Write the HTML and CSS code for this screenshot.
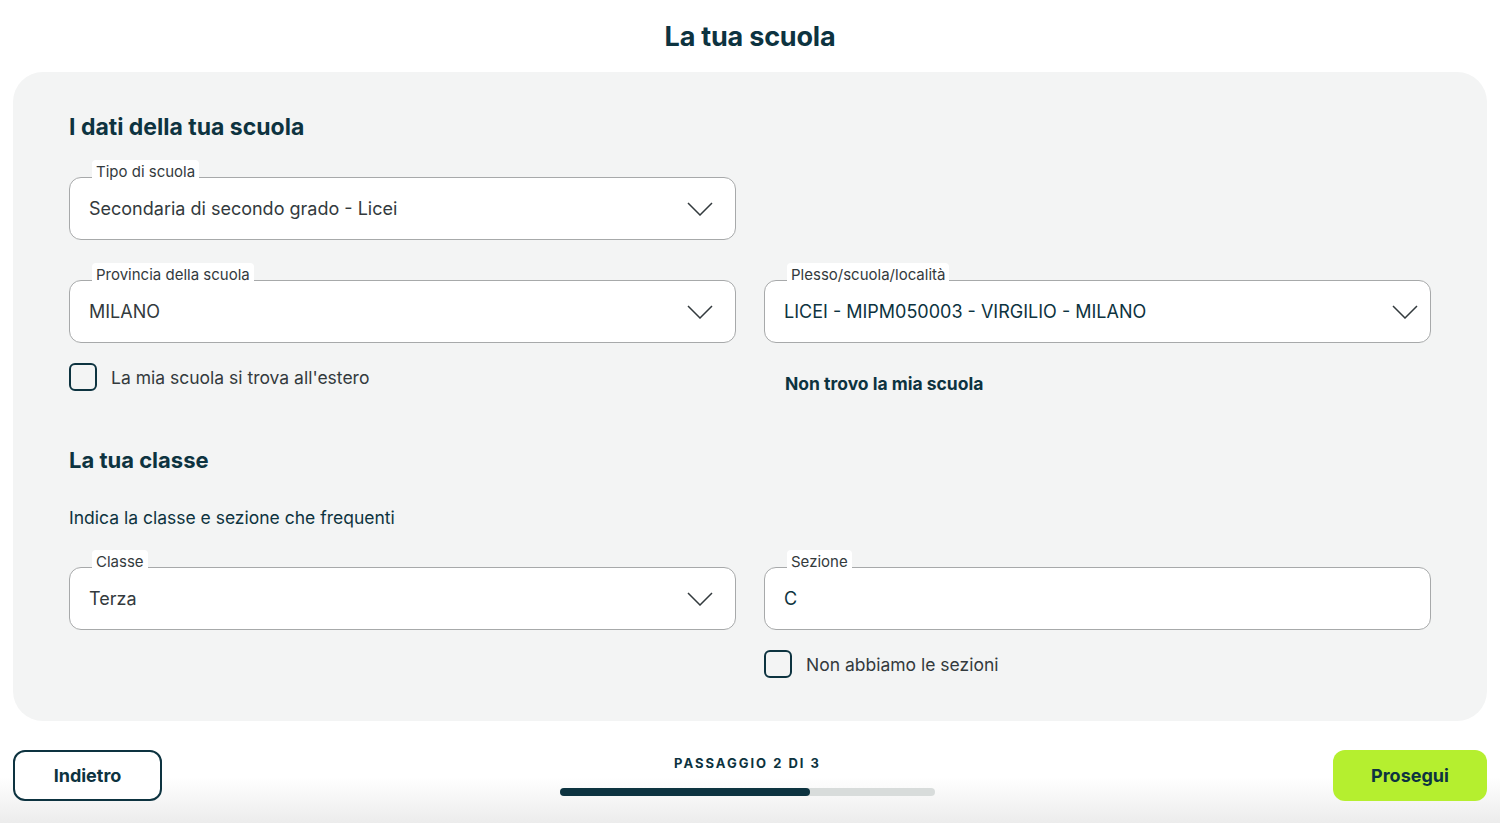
FILE: index.html
```html
<!DOCTYPE html>
<html lang="it">
<head>
    <meta charset="UTF-8">
    <title>La tua scuola</title>
    <link rel="stylesheet" href="styles.css">
</head>
<body>
    <div class="page">
        <h1 class="title">La tua scuola</h1>

        <div class="card">
            <h2>I dati della tua scuola</h2>

            <div class="grid first">
                <div class="field">
                    <span class="field-label">Tipo di scuola</span>
                    <span class="field-value">Secondaria di secondo grado - Licei</span>
                    <svg class="chevron" viewBox="0 0 26 14"><path d="M1 1 L13 13 L25 1" /></svg>
                </div>
                <div></div>
            </div>

            <div class="grid second">
                <div class="field">
                    <span class="field-label">Provincia della scuola</span>
                    <span class="field-value">MILANO</span>
                    <svg class="chevron" viewBox="0 0 26 14"><path d="M1 1 L13 13 L25 1" /></svg>
                </div>
                <div class="field tight">
                    <span class="field-label">Plesso/scuola/località</span>
                    <span class="field-value dark">LICEI - MIPM050003 - VIRGILIO - MILANO</span>
                    <svg class="chevron" viewBox="0 0 26 14"><path d="M1 1 L13 13 L25 1" /></svg>
                </div>
                <label class="check"><span class="box"></span>La mia scuola si trova all'estero</label>
                <a class="link">Non trovo la mia scuola</a>
            </div>

            <h2 class="classe">La tua classe</h2>
            <p class="hint">Indica la classe e sezione che frequenti</p>

            <div class="grid third">
                <div class="field">
                    <span class="field-label">Classe</span>
                    <span class="field-value">Terza</span>
                    <svg class="chevron" viewBox="0 0 26 14"><path d="M1 1 L13 13 L25 1" /></svg>
                </div>
                <div class="field">
                    <span class="field-label">Sezione</span>
                    <span class="field-value dark">C</span>
                </div>
                <div></div>
                <label class="check"><span class="box"></span>Non abbiamo le sezioni</label>
            </div>
        </div>

        <div class="footer">
            <button class="btn back">Indietro</button>
            <div class="progress">
                <div class="progress-text">PASSAGGIO 2 DI 3</div>
                <div class="bar"><div class="bar-fill" style="width: 66.7%"></div></div>
            </div>
            <button class="btn next">Prosegui</button>
        </div>
    </div>
</body>
</html>
```

FILE: styles.css
```css
body, html {
    margin: 0;
    padding: 0;
    font-family: 'Inter', 'Noto Sans', sans-serif;
    color: #0d3340;
    background: #ffffff;
}

.page {
    height: 823px;
    display: flex;
    flex-direction: column;
    overflow: hidden;
}

.title {
    margin: 0;
    height: 72px;
    display: flex;
    align-items: center;
    justify-content: center;
    font-size: 27px;
    font-weight: 700;
    letter-spacing: -0.2px;
}

.card {
    margin: 0 13px;
    background: #f3f4f4; /* light grey card */
    border-radius: 30px;
    padding: 41px 56px 43px 56px;
}

.card h2 {
    margin: 0;
    font-size: 23px;
    line-height: 28px;
    font-weight: 700;
}

.grid {
    display: grid;
    grid-template-columns: 667px 667px;
    column-gap: 28px;
    align-items: start;
}

.grid.first {
    margin-top: 36px;
}

.grid.second {
    margin-top: 40px;
    row-gap: 20px;
}

.grid.third {
    margin-top: 37px;
    row-gap: 20px;
}

.field {
    position: relative;
    height: 63px;
    box-sizing: border-box;
    border: 1px solid #a7a9aa;
    border-radius: 12px;
    background: #ffffff;
    display: flex;
    align-items: center;
    padding: 0 22px 0 19px;
}

.field.tight {
    padding-right: 12px;
}

.field-label {
    position: absolute;
    top: -18px;
    left: 22px;
    background: #ffffff;
    padding: 1px 4px 0 4px;
    border-radius: 4px 4px 0 0;
    font-size: 15px;
    line-height: 22px;
    color: #333a3d;
}

.field-value {
    flex: 1;
    font-size: 18px;
    color: #333a3d;
}

.field-value.dark {
    color: #0d3340;
}

.chevron {
    width: 26px;
    height: 14px;
    fill: none;
    stroke: #333a3d;
    stroke-width: 1.5;
}

.check {
    display: flex;
    align-items: center;
    font-size: 17.5px;
    color: #333a3d;
    height: 28px;
}

.box {
    width: 28px;
    height: 28px;
    box-sizing: border-box;
    border: 2px solid #0d3340;
    border-radius: 6px;
    margin-right: 14px;
}

.link {
    font-size: 17.5px;
    line-height: 20px;
    font-weight: 700;
    padding-left: 21px;
    margin-top: 11px;
    margin-bottom: -11px;
}

.card h2.classe {
    margin-top: 55px;
    font-size: 22px;
}

.hint {
    margin: 32px 0 0 0;
    font-size: 17.5px;
    line-height: 24px;
}

.footer {
    flex: 1;
    display: flex;
    align-items: flex-start;
    justify-content: space-between;
    padding: 29px 13px 0 13px;
    background: linear-gradient(180deg, #ffffff 55%, #ececec 100%);
}

.btn {
    height: 51px;
    border-radius: 12px;
    font-family: inherit;
    font-size: 18px;
    font-weight: 700;
    color: #0d3340;
    cursor: pointer;
}

.btn.back {
    width: 149px;
    background: #ffffff;
    border: 2px solid #0d3340;
}

.btn.next {
    width: 154px;
    background: #b5ef2f; /* lime */
    border: none;
}

.progress {
    width: 375px;
    display: flex;
    flex-direction: column;
    align-items: center;
    padding-top: 5px;
}

.progress-text {
    font-size: 13px;
    font-weight: 700;
    letter-spacing: 2px;
    line-height: 16px;
}

.bar {
    margin-top: 17px;
    width: 100%;
    height: 8px;
    border-radius: 4px;
    background: #d8dcdb;
}

.bar-fill {
    height: 100%;
    border-radius: 4px;
    background: #0d3340;
}
```
